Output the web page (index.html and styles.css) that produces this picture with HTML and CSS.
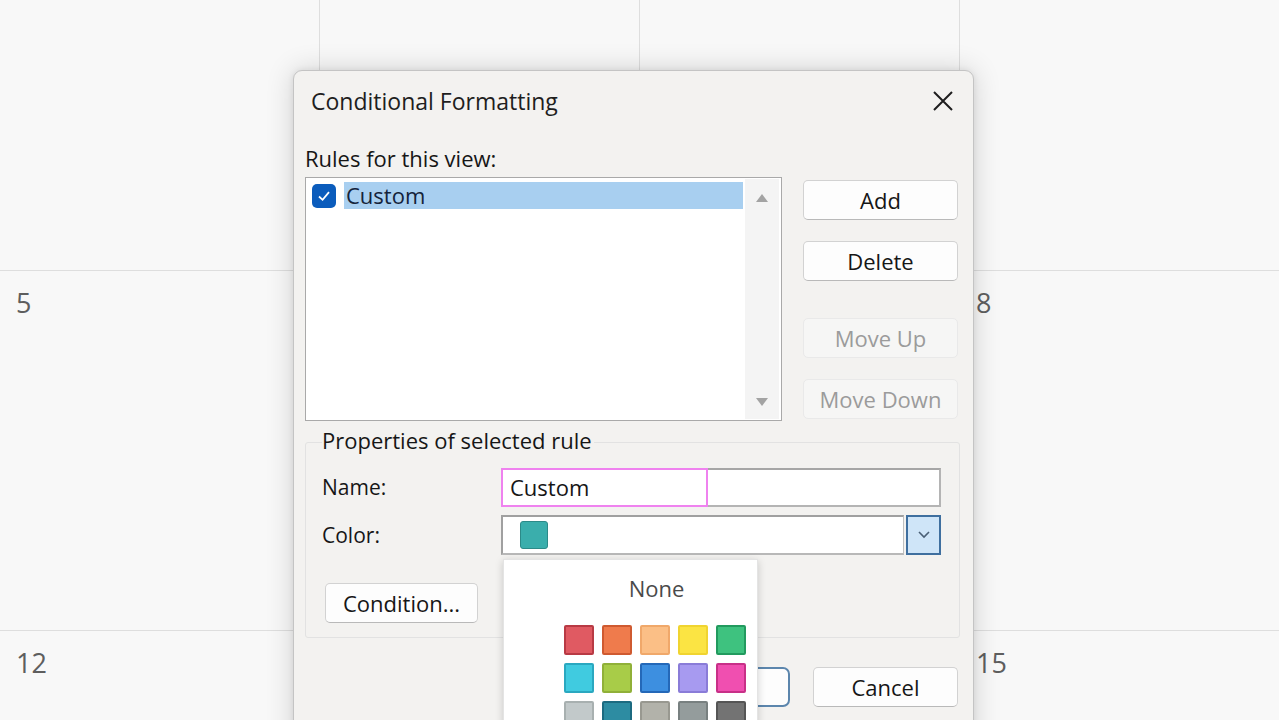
FILE: index.html
```html
<!DOCTYPE html>
<html>
<head>
<meta charset="utf-8">
<link rel="stylesheet" href="styles.css">
</head>
<body>
<div class="calendar">
  <div class="cell"></div><div class="cell"></div><div class="cell"></div><div class="cell last"></div>
  <div class="cell"><span class="day">5</span></div><div class="cell"><span class="day">6</span></div><div class="cell"><span class="day">7</span></div><div class="cell last"><span class="day">8</span></div>
  <div class="cell"><span class="day">12</span></div><div class="cell"><span class="day">13</span></div><div class="cell"><span class="day">14</span></div><div class="cell last"><span class="day">15</span></div>
</div>

<div class="dialog">
  <div class="titlebar">
    <span class="title">Conditional Formatting</span>
    <svg class="close" width="22" height="22" viewBox="0 0 22 22"><path d="M2 2 L20 20 M20 2 L2 20" stroke="#1e1e1e" stroke-width="2" fill="none"/></svg>
  </div>
  <div class="content">
    <div class="rules-label">Rules for this view:</div>
    <div class="rules-row">
      <div class="listbox">
        <div class="items">
          <div class="item">
            <span class="check"><svg width="16" height="16" viewBox="0 0 16 16"><path d="M3 8.5 L6.6 11.8 L13 4.2" stroke="#fff" stroke-width="1.8" fill="none"/></svg></span>
            <span class="item-text">Custom</span>
          </div>
        </div>
        <div class="scrollbar">
          <svg width="14" height="10" viewBox="0 0 14 10"><path d="M7 1 L13 9 L1 9 Z" fill="#a3a3a3"/></svg>
          <svg width="14" height="10" viewBox="0 0 14 10"><path d="M1 1 L13 1 L7 9 Z" fill="#a3a3a3"/></svg>
        </div>
      </div>
      <div class="side-buttons">
        <button class="btn">Add</button>
        <button class="btn gap1">Delete</button>
        <button class="btn disabled gap2">Move Up</button>
        <button class="btn disabled gap1">Move Down</button>
      </div>
    </div>

    <div class="group">
      <div class="legend">Properties of selected rule</div>
      <div class="field-row">
        <span class="field-label">Name:</span>
        <div class="textbox"><span class="sel">Custom</span></div>
      </div>
      <div class="field-row color-row">
        <span class="field-label">Color:</span>
        <div class="combo">
          <div class="combo-value"><span class="swatch-current"></span></div>
          <div class="combo-btn"><svg width="14" height="10" viewBox="0 0 14 10"><path d="M2 2 L7 7 L12 2" stroke="#4a5f75" stroke-width="1.6" fill="none"/></svg></div>
        </div>
      </div>
      <button class="btn cond">Condition...</button>
    </div>

    <div class="footer">
      <button class="btn ok">OK</button>
      <button class="btn cancel">Cancel</button>
    </div>
  </div>

  <div class="dropdown">
    <div class="none">None</div>
    <div class="swatches">
      <span class="sw" style="background:#e05a62;border-color:#b83a44"></span>
      <span class="sw" style="background:#ef7b4c;border-color:#cf5a30"></span>
      <span class="sw" style="background:#fbbf86;border-color:#f0a86a"></span>
      <span class="sw" style="background:#fbe443;border-color:#f0d430"></span>
      <span class="sw" style="background:#3ec27f;border-color:#229a5e"></span>
      <span class="sw" style="background:#40cbe0;border-color:#2aa8c0"></span>
      <span class="sw" style="background:#a8cc48;border-color:#90b038"></span>
      <span class="sw" style="background:#3d8fe0;border-color:#2468b8"></span>
      <span class="sw" style="background:#a79af0;border-color:#8a7cd8"></span>
      <span class="sw" style="background:#f04fb0;border-color:#c83088"></span>
      <span class="sw" style="background:#c2c9ca;border-color:#a8b0b0"></span>
      <span class="sw" style="background:#2d8ca2;border-color:#1c6a80"></span>
      <span class="sw" style="background:#b2b2aa;border-color:#989890"></span>
      <span class="sw" style="background:#949c9c;border-color:#788080"></span>
      <span class="sw" style="background:#737373;border-color:#555"></span>
    </div>
  </div>
</div>
</body>
</html>
```

FILE: styles.css
```css
* { box-sizing: border-box; }
html, body {
  margin: 0;
  padding: 0;
  width: 1279px;
  height: 720px;
  overflow: hidden;
  background: #f8f8f8;
  font-family: "Open Sans", "Noto Sans", sans-serif;
}
.calendar {
  display: grid;
  grid-template-columns: 320px 320px 320px 319px;
  grid-template-rows: 271px 360px 360px;
}
.cell {
  border-right: 1px solid #dedede;
  border-bottom: 1px solid #dedede;
  padding: 15px 0 0 16px;
}
.cell.last { border-right: none; }
.day {
  font-size: 27px;
  font-weight: 500;
  color: #5e5e5e;
  line-height: 34px;
}

.dialog {
  position: absolute;
  left: 293px;
  top: 70px;
  width: 681px;
  height: 690px;
  background: #f3f2f0;
  border: 1px solid #c4c4c4;
  border-radius: 9px;
  box-shadow: 0 0 28px rgba(0,0,0,0.16), 0 0 6px rgba(0,0,0,0.08);
  color: #161616;
  font-size: 22px;
  font-weight: 500;
}
.titlebar {
  height: 60px;
  display: flex;
  align-items: center;
  justify-content: space-between;
  padding: 0 19px 0 17px;
}
.title { font-size: 23px; color: #1e1e1e; line-height: 30px; font-weight: 400; }
.close { display: block; }

.content { padding: 0 15px 0 11px; }
.rules-label {
  margin-top: 14px;
  line-height: 26px;
  font-size: 22px;
}
.rules-row {
  display: flex;
  gap: 21px;
  margin-top: 6px;
}
.listbox {
  width: 477px;
  height: 244px;
  background: #fff;
  border: 1px solid #a9a9a9;
  display: flex;
  padding: 4px 2px 2px 6px;
}
.items { flex: 1; }
.item {
  display: flex;
  align-items: center;
  height: 27px;
}
.check {
  width: 24px;
  height: 24px;
  border-radius: 5px;
  background: #0b5cbc;
  display: flex;
  align-items: center;
  justify-content: center;
  margin-right: 8px;
}
.item-text {
  flex: 1;
  background: #a8cff0;
  height: 27px;
  line-height: 27px;
  padding-left: 2px;
  color: #14233a;
}
.scrollbar {
  width: 34px;
  margin: -3px 0 -1px 2px;
  background: #f4f4f4;
  display: flex;
  flex-direction: column;
  justify-content: space-between;
  align-items: center;
  padding: 14px 0 12px;
}
.side-buttons {
  display: flex;
  flex-direction: column;
  padding-top: 3px;
}
.btn {
  font-family: inherit;
  font-size: 22px;
  font-weight: 500;
  line-height: 30px;
  color: #161616;
  background: #fdfdfd;
  border: 1px solid #d2d2d2;
  border-bottom-color: #b9b9b9;
  border-radius: 5px;
  height: 40px;
  width: 155px;
  padding: 0;
}
.gap1 { margin-top: 21px; }
.gap2 { margin-top: 37px; }
.btn.disabled {
  background: #f6f6f5;
  border-color: #e9e9e9;
  color: #9b9b9b;
}

.group {
  margin-top: 21px;
  height: 196px;
  width: 655px;
  border: 1px solid #e2e2e2;
  border-radius: 3px;
  padding: 0 17px 0 16px;
}
.legend {
  margin-top: -16px;
  line-height: 26px;
  font-size: 22px;
  background: #f3f2f0;
  width: fit-content;
  padding-right: 2px;
}
.field-row {
  display: flex;
  align-items: center;
  margin-top: 14px;
  height: 40px;
}
.color-row { margin-top: 8px; }
.field-label { width: 179px; font-size: 21px; }
.textbox {
  width: 440px;
  height: 39px;
  background: #fff;
  border: 2px solid #b4b4b4;
  border-top-color: #a6a6a6;
  position: relative;
}
.sel {
  position: absolute;
  left: -2px;
  top: -2px;
  width: 207px;
  height: 39px;
  border: 2px solid #ef82ef;
  padding-left: 7px;
  line-height: 35px;
  color: #161616;
}
.combo {
  display: flex;
  width: 440px;
  height: 40px;
}
.combo-value {
  flex: 1;
  background: #fff;
  border: 2px solid #a0a0a0;
  border-right: 1px solid #c0c0c0;
  border-bottom-color: #b8b8b8;
  display: flex;
  align-items: center;
  padding-left: 17px;
}
.swatch-current {
  width: 28px;
  height: 28px;
  background: #3aaeac;
  border: 1px solid #2c8a88;
  border-radius: 3px;
}
.combo-btn {
  width: 35px;
  margin-left: 2px;
  background: #cfe5f8;
  border: 2px solid #3f6f9f;
  display: flex;
  align-items: center;
  justify-content: center;
}
.btn.cond {
  margin-top: 28px;
  margin-left: 3px;
  width: 153px;
}
.footer {
  display: flex;
  justify-content: flex-end;
  gap: 23px;
  margin-top: 29px;
}
.btn.ok {
  width: 145px;
  border: 2px solid #5c86ad;
  border-radius: 7px;
}
.btn.cancel { width: 145px; }

.dropdown {
  position: absolute;
  left: 209px;
  top: 488px;
  width: 255px;
  height: 200px;
  background: #fff;
  box-shadow: 0 2px 8px rgba(0,0,0,0.18);
  border: 1px solid #e4e4e4;
}
.none {
  text-align: center;
  font-size: 22px;
  color: #4a4a4a;
  margin-top: 13px;
  line-height: 30px;
  padding-left: 52px;
}
.swatches {
  display: grid;
  grid-template-columns: repeat(5, 30px);
  gap: 8px 8px;
  margin: 22px 0 0 60px;
}
.sw {
  width: 30px;
  height: 30px;
  border: 2px solid;
  border-radius: 2px;
}
```
